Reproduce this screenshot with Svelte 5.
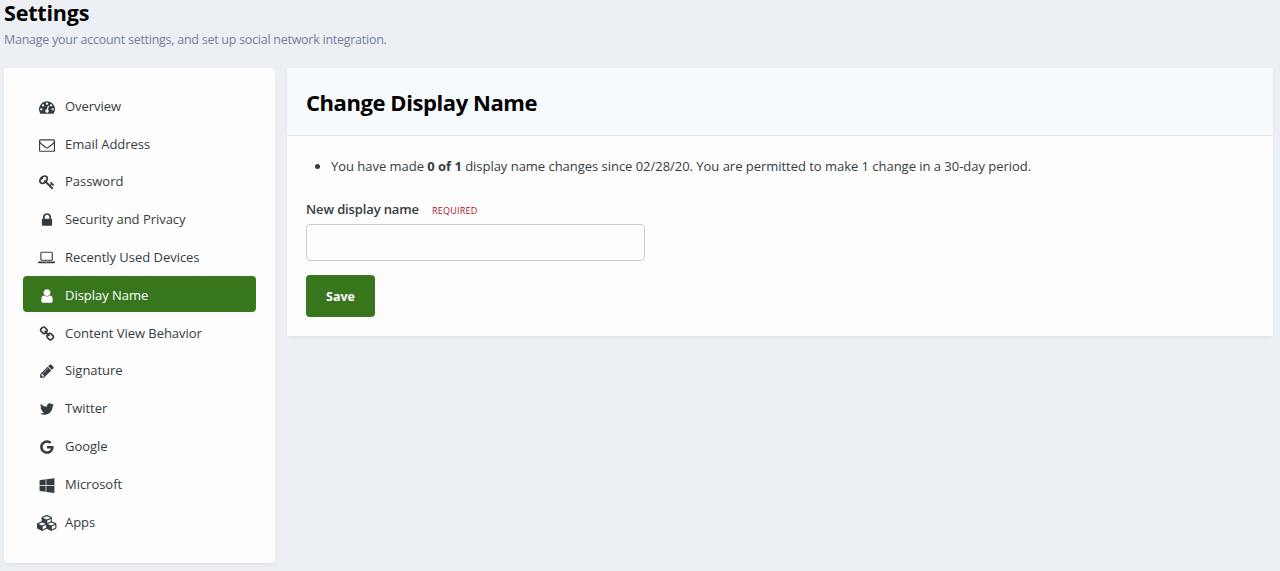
<script lang="ts">
  interface NavItem {
    label: string;
    width?: number;
    icon: string;
  }

  // Glyphs share a 1792-unit em; wider ones carry their own width.
  const items: NavItem[] = [
    {
      label: 'Overview',
      icon: 'M384 1152q0-53-37.5-90.5t-90.5-37.5-90.5 37.5-37.5 90.5 37.5 90.5 90.5 37.5 90.5-37.5 37.5-90.5zm192-448q0-53-37.5-90.5t-90.5-37.5-90.5 37.5-37.5 90.5 37.5 90.5 90.5 37.5 90.5-37.5 37.5-90.5zm428 481l101-382q6-26-7.5-48.5t-38.5-29.5-48 6.5-30 39.5l-101 382q-60 5-107 43.5t-63 98.5q-20 77 20 146t117 89 146-20 89-117q16-60-6-117t-72-91zm660-33q0-53-37.5-90.5t-90.5-37.5-90.5 37.5-37.5 90.5 37.5 90.5 90.5 37.5 90.5-37.5 37.5-90.5zm-640-640q0-53-37.5-90.5t-90.5-37.5-90.5 37.5-37.5 90.5 37.5 90.5 90.5 37.5 90.5-37.5 37.5-90.5zm448 192q0-53-37.5-90.5t-90.5-37.5-90.5 37.5-37.5 90.5 37.5 90.5 90.5 37.5 90.5-37.5 37.5-90.5zm320 448q0 261-141 483-19 29-54 29h-1402q-35 0-54-29-141-221-141-483 0-182 71-348t191-286 286-191 348-71 348 71 286 191 191 286 71 348z',
    },
    {
      label: 'Email Address',
      icon: 'M1664 1504v-768q-32 36-69 66-268 206-426 338-51 43-83 67t-86.5 48.5-102.5 24.5h-2q-48 0-102.5-24.5t-86.5-48.5-83-67q-158-132-426-338-37-30-69-66v768q0 13 9.5 22.5t22.5 9.5h1472q13 0 22.5-9.5t9.5-22.5zm0-1051v-24.5l-.5-13-3-12.5-5.5-9-9-7.5-14-2.5h-1472q-13 0-22.5 9.5t-9.5 22.5q0 168 147 284 193 152 401 317 6 5 35 29.5t46 37.5 44.5 31.5 50.5 27.5 43 9h2q20 0 43-9t50.5-27.5 44.5-31.5 46-37.5 35-29.5q208-165 401-317 54-43 100.5-115.5t46.5-131.5zm128-37v1088q0 66-47 113t-113 47h-1472q-66 0-113-47t-47-113v-1088q0-66 47-113t113-47h1472q66 0 113 47t47 113z',
    },
    {
      label: 'Password',
      icon: 'M832 512q0-80-56-136t-136-56-136 56-56 136q0 42 19 83-41-19-83-19-80 0-136 56t-56 136 56 136 136 56 136-56 56-136q0-42-19-83 41 19 83 19 80 0 136-56t56-136zm851 704q0 17-49 66t-66 49q-9 0-28.5-16t-36.5-33-38.5-40-24.5-26l-96 96 220 220q28 28 28 68 0 42-39 81t-81 39q-40 0-68-28l-671-671q-176 131-365 131-163 0-265.5-102.5t-102.5-265.5q0-160 95-313t248-248 313-95q163 0 265.5 102.5t102.5 265.5q0 189-131 365l355 355 96-96q-3-3-26-24.5t-40-38.5-33-36.5-16-28.5q0-17 49-66t66-49q13 0 23 10 6 6 46 44.5t82 79.5 86.5 86 73 78 28.5 41z',
    },
    {
      label: 'Security and Privacy',
      icon: 'M640 768h512v-192q0-106-75-181t-181-75-181 75-75 181v192zm832 96v576q0 40-28 68t-68 28h-960q-40 0-68-28t-28-68v-576q0-40 28-68t68-28h32v-192q0-184 132-316t316-132 316 132 132 316v192h32q40 0 68 28t28 68z',
    },
    {
      label: 'Recently Used Devices',
      width: 1920,
      icon: 'M416 1216q-66 0-113-47t-47-113v-704q0-66 47-113t113-47h1088q66 0 113 47t47 113v704q0 66-47 113t-113 47h-1088zm-32-864v704q0 13 9.5 22.5t22.5 9.5h1088q13 0 22.5-9.5t9.5-22.5v-704q0-13-9.5-22.5t-22.5-9.5h-1088q-13 0-22.5 9.5t-9.5 22.5zm1376 928h160v96q0 40-47 68t-113 28h-1600q-66 0-113-28t-47-68v-96h1760zm-720 96q16 0 16-16t-16-16h-160q-16 0-16 16t16 16h160z',
    },
    {
      label: 'Display Name',
      icon: 'M1536 1399q0 109-62.5 187t-150.5 78h-854q-88 0-150.5-78t-62.5-187q0-85 8.5-160.5t31.5-152 58.5-131 94-89 134.5-34.5q131 128 313 128t313-128q76 0 134.5 34.5t94 89 58.5 131 31.5 152 8.5 160.5zm-256-887q0 159-112.5 271.5t-271.5 112.5-271.5-112.5-112.5-271.5 112.5-271.5 271.5-112.5 271.5 112.5 112.5 271.5z',
    },
    {
      label: 'Content View Behavior',
      icon: 'M1520 1216q0-40-28-68l-208-208q-28-28-68-28-42 0-72 32 3 3 19 18.5t21.5 21.5 15 19 13 25.5 3.5 27.5q0 40-28 68t-68 28q-15 0-27.5-3.5t-25.5-13-19-15-21.5-21.5-18.5-19q-33 31-33 73 0 40 28 68l206 207q27 27 68 27 40 0 68-26l147-146q28-28 28-67zm-703-705q0-40-28-68l-206-207q-28-28-68-28-39 0-68 27l-147 146q-28 28-28 67 0 40 28 68l208 208q27 27 68 27 42 0 72-31-3-3-19-18.5t-21.5-21.5-15-19-13-25.5-3.5-27.5q0-40 28-68t68-28q15 0 27.5 3.5t25.5 13 19 15 21.5 21.5 18.5 19q33-31 33-73zm895 705q0 120-85 203l-147 146q-83 83-203 83-121 0-204-85l-206-207q-83-83-83-203 0-123 88-209l-88-88q-86 88-208 88-120 0-204-84l-208-208q-84-84-84-204t85-203l147-146q83-83 203-83 121 0 204 85l206 207q83 83 83 203 0 123-88 209l88 88q86-88 208-88 120 0 204 84l208 208q84 84 84 204z',
    },
    {
      label: 'Signature',
      icon: 'M491 1536l91-91-235-235-91 91v107h128v128h107zm523-928q0-22-22-22-10 0-17 7l-542 542q-7 7-7 17 0 22 22 22 10 0 17-7l542-542q7-7 7-17zm-54-192l416 416-832 832h-416v-416zm683 96q0 53-37 90l-166 166-416-416 166-165q36-38 90-38 53 0 91 38l235 234q37 39 37 91z',
    },
    {
      label: 'Twitter',
      icon: 'M1684 408q-67 98-162 167 1 14 1 42 0 130-38 259.5t-115.5 248.5-184.5 210.5-258 146-323 54.5q-271 0-496-145 35 4 78 4 225 0 401-138-105-2-188-64.5t-114-159.5q33 5 61 5 43 0 85-11-112-23-185.5-111.5t-73.5-205.5v-4q68 38 146 41-66-44-105-115t-39-154q0-88 44-163 121 149 294.5 238.5t371.5 99.5q-8-38-8-74 0-134 94.5-228.5t228.5-94.5q140 0 236 102 109-21 205-78-37 115-142 178 93-10 186-50z',
    },
    {
      label: 'Google',
      icon: 'M896 786h725q12 67 12 128 0 217-91 387.5t-259.5 266.5-386.5 96q-157 0-299-60.5t-245-163.5-163.5-245-60.5-299 60.5-299 163.5-245 245-163.5 299-60.5q300 0 515 201l-209 201q-123-119-306-119-129 0-238.5 65t-173.5 176.5-64 243.5 64 243.5 173.5 176.5 238.5 65q87 0 160-24t120-60 82-82 51.5-87 22.5-78h-436v-264z',
    },
    {
      label: 'Microsoft',
      icon: 'M746 1006v651l-682-94v-557h682zm0-743v659h-682v-565zm982 743v786l-907-125v-661h907zm0-878v794h-907v-669z',
    },
    {
      label: 'Apps',
      width: 2304,
      icon: 'M640 1632l384-192v-314l-384 164v342zm-64-454l404-173-404-173-404 173zm1088 454l384-192v-314l-384 164v342zm-64-454l404-173-404-173-404 173zm-448-293l384-165v-266l-384 164v267zm-64-379l441-189-441-189-441 189zm1088 518v416q0 36-19 67t-52 47l-448 224q-25 14-57 14t-57-14l-448-224q-4-2-7-4-2 2-7 4l-448 224q-25 14-57 14t-57-14l-448-224q-33-16-52-47t-19-67v-416q0-38 21.5-70t56.5-48l434-186v-400q0-38 21.5-70t56.5-48l448-192q23-10 50-10t50 10l448 192q35 16 56.5 48t21.5 70v400l434 186q36 16 57 48t21 70z',
    },
  ];

  let active = $state('Display Name');
  let displayName = $state('');
</script>

<div class="page">
  <header>
    <h1>Settings</h1>
    <p>Manage your account settings, and set up social network integration.</p>
  </header>

  <div class="columns">
    <nav class="card">
      {#each items as item (item.label)}
        {@const w = item.width ?? 1792}
        <button class="item" class:active={active === item.label} onclick={() => (active = item.label)}>
          <span class="icon">
            <svg viewBox="0 0 {w} 1792" width={(w / 1792) * 16} height="16" aria-hidden="true">
              <path d={item.icon} />
            </svg>
          </span>
          <span class="label">{item.label}</span>
        </button>
      {/each}
    </nav>

    <main class="card">
      <h2>Change Display Name</h2>
      <form onsubmit={(e) => e.preventDefault()}>
        <ul>
          <li>
            You have made <strong>0 of 1</strong> display name changes since 02/28/20. You are permitted to make 1 change in a 30-day period.
          </li>
        </ul>
        <div class="field-head">
          <label for="display-name">New display name</label>
          <span class="required">REQUIRED</span>
        </div>
        <input id="display-name" type="text" bind:value={displayName} />
        <button class="save" type="submit">Save</button>
      </form>
    </main>
  </div>
</div>

<style>
  :global(body) {
    background: #ecf0f5;
  }

  .page {
    height: 571px;
    box-sizing: border-box;
    padding: 0 7px 0 4px;
    font-family: 'Segoe UI', 'Open Sans', 'Noto Sans', sans-serif;
    font-size: 13px;
    letter-spacing: -0.03px;
    color: #353c41;
  }

  header {
    display: flow-root;
    height: 68px;
  }

  h1,
  h2 {
    margin: 0;
    font-size: 22px;
    font-weight: 700;
    line-height: 26px;
    letter-spacing: -0.43px;
    color: #000;
  }

  h1 {
    font-size: 21.5px;
    line-height: 25px;
    letter-spacing: -0.2px;
  }

  header p {
    margin: 5px 0 0;
    line-height: 20px;
    font-size: 12.5px;
    color: #777f98;
    letter-spacing: -0.26px;
  }

  .columns {
    display: flex;
    align-items: flex-start;
    gap: 12px;
  }

  .card {
    background: #fdfdfd;
    box-shadow: 0 2px 4px -1px rgba(0, 0, 0, 0.07);
  }

  nav {
    flex: none;
    box-sizing: border-box;
    width: 271px;
    height: 495px;
    padding: 19.5px 19px;
    border-radius: 4px;
    display: flex;
    flex-direction: column;
    gap: 2px;
  }

  .item {
    flex: none;
    display: flex;
    align-items: center;
    height: 35.8px;
    padding: 0 14px;
    border: 0;
    border-radius: 4px;
    background: none;
    font: inherit;
    letter-spacing: -0.03px;
    color: inherit;
    cursor: pointer;
  }

  .item.active {
    background: #37761d;
    color: #fff;
  }

  .icon {
    flex: none;
    display: flex;
    justify-content: center;
    width: 20px;
    margin-right: 8px;
    padding-top: 3px;
  }

  .label {
    padding-top: 1px;
  }

  svg {
    flex: none;
    fill: currentColor;
  }

  main {
    flex: 1;
    min-width: 0;
  }

  h2 {
    padding: 21px 19px 20px;
    background: #f6fafd;
    border-bottom: 1px solid #e1e6ea;
  }

  form {
    padding: 20px 19px 19px;
  }

  ul {
    margin: 0;
    padding-left: 25px;
    line-height: 21px;
  }

  .field-head {
    display: flex;
    align-items: center;
    gap: 13px;
    height: 20px;
    margin: 22px 0 5px;
  }

  label {
    font-weight: 600;
    letter-spacing: -0.13px;
  }

  .required {
    padding-top: 2px;
    font-size: 9px;
    letter-spacing: 0.25px;
    color: #a8142c;
  }

  input {
    display: block;
    box-sizing: border-box;
    width: 339px;
    height: 37px;
    padding: 8px;
    border: 1px solid #c4ccda;
    border-radius: 4px;
    background: #fdfdfd;
    font: inherit;
  }

  .save {
    display: block;
    width: 69px;
    height: 42px;
    margin-top: 14px;
    padding: 0;
    border: 0;
    border-radius: 4px;
    background: #37761d;
    color: #fff;
    font: inherit;
    font-size: 12.5px;
    font-weight: 700;
    cursor: pointer;
  }
</style>
